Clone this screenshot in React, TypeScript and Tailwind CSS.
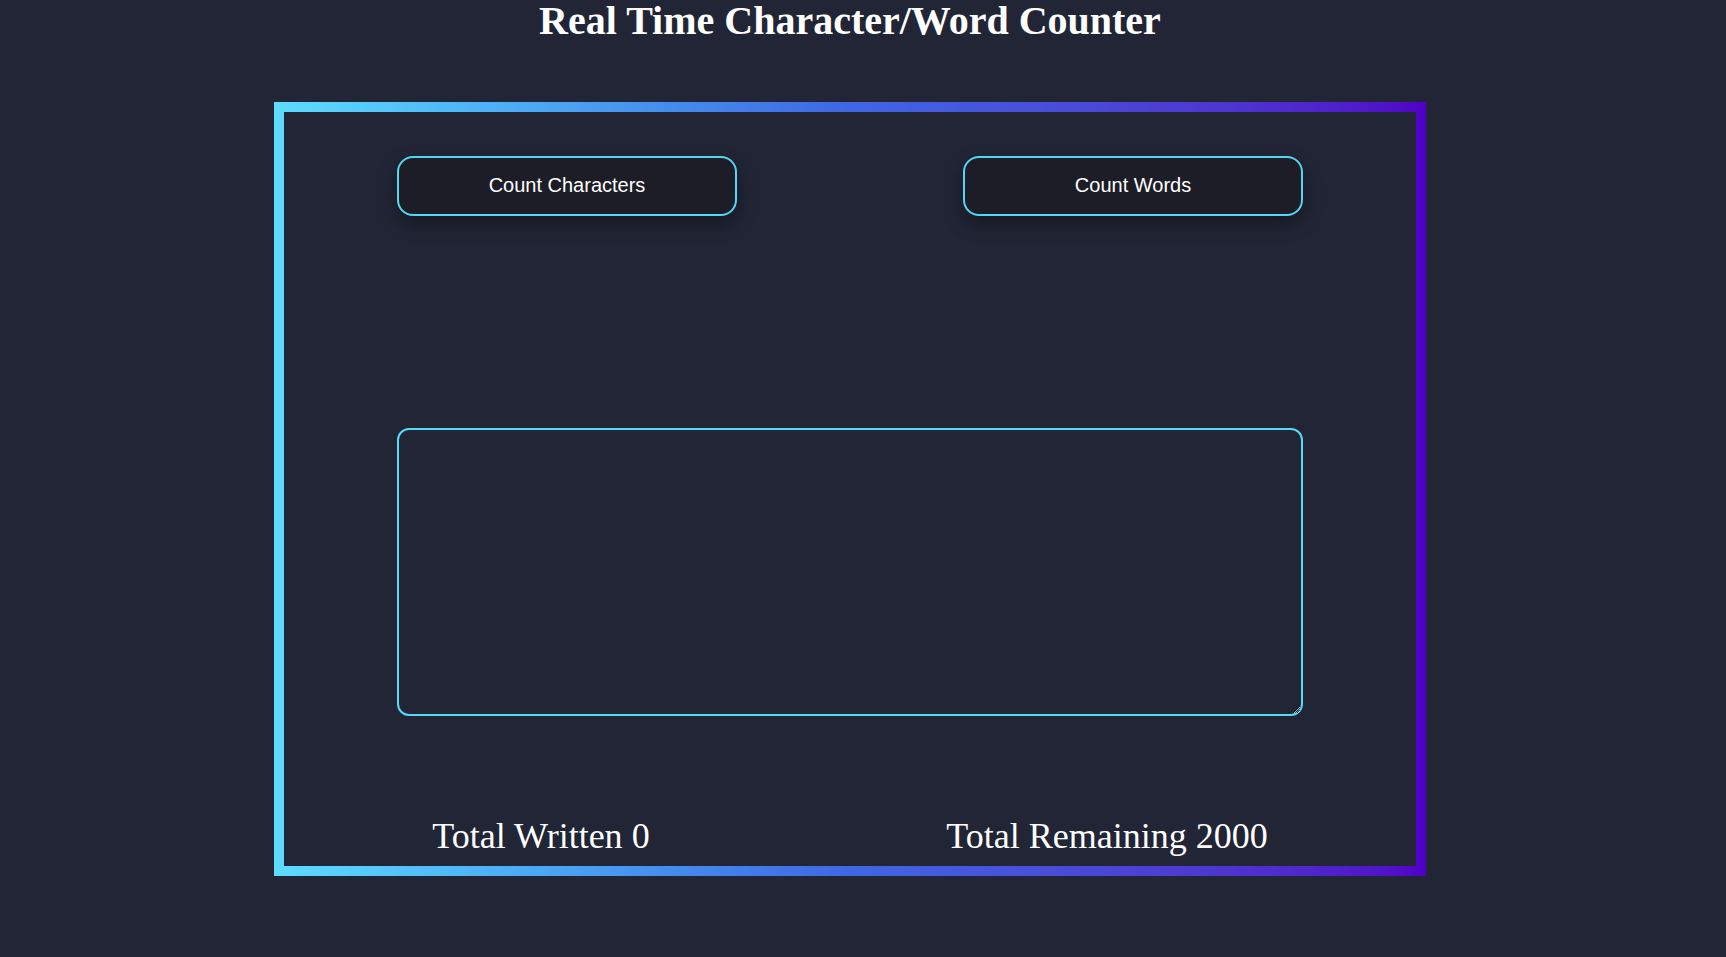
import React, { useState } from "react";

const LIMIT = 2000;

const App = () => {
  const [text, setText] = useState("");
  const [mode, setMode] = useState<"chars" | "words">("chars");

  const written =
    mode === "chars"
      ? text.length
      : text.trim() === ""
        ? 0
        : text.trim().split(/\s+/).length;

  return (
    <div className="min-h-screen bg-[#212535] text-white">
      <div className="w-[1700px] pb-[81px]">
        {/* Heading */}
        <h1 className="m-0 text-center font-['Liberation_Serif',serif] text-[40px] font-bold leading-[42px]">
          Real Time Character/Word Counter
        </h1>

        {/* Gradient frame */}
        <div className="mx-auto mt-[60px] w-[1152px] bg-linear-to-r from-[#5ddcff] via-[#3f66e3] to-[#5000c6] p-[10px]">
          <div className="bg-[#212535] pt-[44px] pb-[10px]">
            <div className="flex justify-around">
              <button
                onClick={() => setMode("chars")}
                className="h-[60px] w-[340px] rounded-[16px] border-2 border-[#52d6f4] bg-[#1d1d27] pb-[2px] font-['Liberation_Sans',Arial,sans-serif] text-[20px] text-white shadow-[0_8px_18px_rgba(0,0,0,0.35)]"
              >
                Count Characters
              </button>
              <button
                onClick={() => setMode("words")}
                className="h-[60px] w-[340px] rounded-[16px] border-2 border-[#52d6f4] bg-[#1d1d27] pb-[2px] font-['Liberation_Sans',Arial,sans-serif] text-[20px] text-white shadow-[0_8px_18px_rgba(0,0,0,0.35)]"
              >
                Count Words
              </button>
            </div>

            <div className="mt-[212px] flex justify-center">
              <textarea
                value={text}
                maxLength={LIMIT}
                onChange={(e) => setText(e.target.value)}
                className="block h-[288px] w-[906px] rounded-[12px] border-2 border-[#56daf7] bg-transparent p-2 font-['Liberation_Sans',Arial,sans-serif] text-base text-white outline-none"
              />
            </div>

            {/* Totals */}
            <div className="mt-[100px] flex justify-around font-['Liberation_Serif',serif] text-[36px] leading-[40px]">
              <span>Total Written {written}</span>
              <span>Total Remaining {LIMIT - written}</span>
            </div>
          </div>
        </div>
      </div>
    </div>
  );
};

export default App;
